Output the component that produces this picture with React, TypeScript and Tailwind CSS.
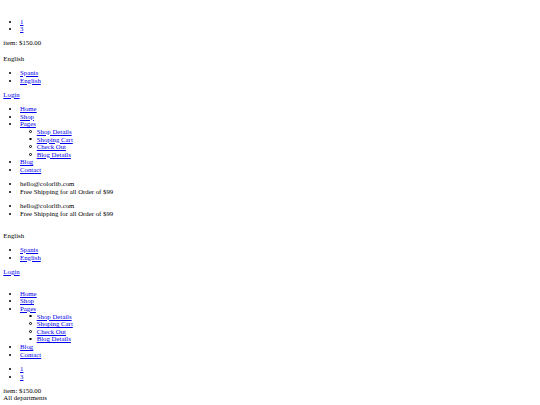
const link = 'text-[#0000ee] underline'
const circle =
  "before:content-[''] before:inline-block before:w-[2.7px] before:h-[2.7px] before:rounded-full before:border-[0.7px] before:border-black before:-ml-[7.7px] before:mr-[5px] before:align-[1.1px]"

function Img() {
  // broken image: keeps its own empty line box
  return <div className="h-[7.62px]" />
}

function Cart() {
  return (
    <>
      <ul className="my-[6.63px] list-disc pl-[16.7px]">
        <li><a className={link} href="#">1</a></li>
        <li><a className={link} href="#">3</a></li>
      </ul>
      <div>item: <span>$150.00</span></div>
    </>
  )
}

function Language() {
  return (
    <div>
      <Img />
      <div>English</div>
      <ul className="my-[6.63px] list-disc pl-[16.7px]">
        <li><a className={link} href="#">Spanis</a></li>
        <li><a className={link} href="#">English</a></li>
      </ul>
    </div>
  )
}

function Auth() {
  return (
    <div>
      <a className={link} href="#">Login</a>
    </div>
  )
}

function Menu() {
  return (
    <ul className="my-[6.63px] list-disc pl-[16.7px]">
      <li><a className={link} href="#">Home</a></li>
      <li><a className={link} href="#">Shop</a></li>
      <li>
        <a className={link} href="#">Pages</a>
        <ul className="list-none pl-[16.7px]">
          {['Shop Details', 'Shoping Cart', 'Check Out', 'Blog Details'].map((item) => (
            <li key={item} className={circle}><a className={link} href="#">{item}</a></li>
          ))}
        </ul>
      </li>
      <li><a className={link} href="#">Blog</a></li>
      <li><a className={link} href="#">Contact</a></li>
    </ul>
  )
}

function Contact() {
  return (
    <ul className="my-[6.63px] list-disc pl-[16.7px]">
      <li>hello@colorlib.com</li>
      <li>Free Shipping for all Order of $99</li>
    </ul>
  )
}

const departments = ['Fresh Meat', 'Vegetables', 'Fruit & Nut Gifts', 'Fresh Berries', 'Ocean Foods', 'Butter & Eggs']

export default function App() {
  return (
    <div className="min-h-screen bg-white p-[3.34px] font-['Liberation_Serif','Times_New_Roman',serif] text-[6.8px] leading-[7.62px] text-black">
      {/* humberger menu */}
      <div>
        <Img />
        <Cart />
        <div>
          <Language />
          <Auth />
        </div>
        <nav>
          <Menu />
        </nav>
        <div />
        <Contact />
      </div>

      {/* header */}
      <header>
        <Contact />
        <Language />
        <Auth />
        <Img />
        <nav>
          <Menu />
        </nav>
        <Cart />
      </header>

      {/* hero */}
      <section>
        <div>All departments</div>
        <ul className="my-[6.63px] list-disc pl-[16.7px]">
          {departments.map((d) => (
            <li key={d}><a className={link} href="#">{d}</a></li>
          ))}
        </ul>
      </section>
    </div>
  )
}
